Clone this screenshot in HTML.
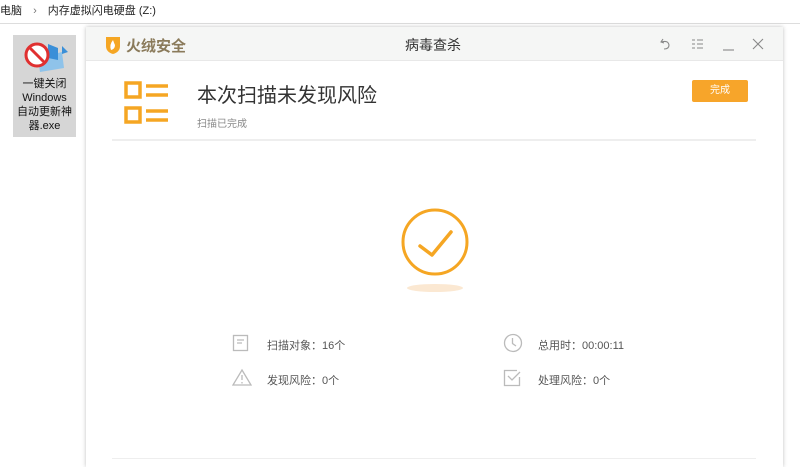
<!DOCTYPE html>
<html><head><meta charset="utf-8"><style>
*{margin:0;padding:0;box-sizing:border-box}
body{width:800px;height:461px;overflow:hidden;background:#fff;font-family:"Liberation Sans","Noto Sans CJK SC",sans-serif;position:relative;color:#333}
.abs{position:absolute}
</style></head><body>
<div class="abs" style="left:0;top:2px;font-size:11px;color:#222;white-space:nowrap">电脑 <span style="color:#777;margin:0 8px">›</span> 内存虚拟闪电硬盘 (Z:)</div>
<div class="abs" style="left:0;top:23px;width:800px;height:1px;background:#ddd"></div>
<div class="abs" style="left:13px;top:35px;width:63px;height:102px;background:#d6d6d6"></div>
<svg class="abs" style="left:22px;top:38px" width="46" height="36" viewBox="0 0 46 36">
<path d="M16 20 L40 14 L42 30 L18 34Z" fill="#8fc3ea"/><path d="M26 6 L36 10 L36 22 L26 20Z" fill="#3a8fd8"/><path d="M40 8 L46 14 L40 16Z" fill="#3a8fd8"/>
<circle cx="15" cy="17" r="11" fill="#fff" stroke="#e03030" stroke-width="3"/><path d="M8 10 L22 24" stroke="#e03030" stroke-width="3"/></svg>
<div class="abs" style="left:13px;top:77px;width:63px;text-align:center;font-size:11px;line-height:14px;color:#111">一键关闭<br>Windows<br>自动更新神<br>器.exe</div>

<div class="abs" style="left:86px;top:27px;width:697px;height:440px;background:#fff;box-shadow:0 0 4px rgba(0,0,0,.25)"></div>
<div class="abs" style="left:86px;top:27px;width:697px;height:34px;background:#f5f6f5;border-bottom:1px solid #e8e8e8"></div>
<svg class="abs" style="left:105px;top:35px" width="16" height="19" viewBox="0 0 16 19"><path d="M1 2 L15 2 L15 11 Q15 17 8 19 Q1 17 1 11Z" fill="#f5a623"/><path d="M8 5 Q4 10 6 15 Q10 14 10 10 Q9 8 8 5Z" fill="#fff"/></svg>
<div class="abs" style="left:126px;top:35px;font-size:15px;font-weight:bold;color:#8a7a5a">火绒安全</div>
<div class="abs" style="left:405px;top:35px;font-size:14px;color:#333">病毒查杀</div>
<svg class="abs" style="left:660px;top:37px" width="110" height="14" fill="none" stroke="#888" stroke-width="1.1">
<path d="M3 2 L1 5 L4 6 M1.5 5 Q8 3 9 8 Q9 12 4 12"/>
<path d="M32 3H35M37 3H43M32 7H35M37 7H43M32 11H35M37 11H43"/>
<path d="M63 13H74"/>
<path d="M93 2L103 12M103 2L93 12"/></svg>

<svg class="abs" style="left:124px;top:81px" width="46" height="45" viewBox="0 0 46 45">
<g fill="none" stroke="#f5a623" stroke-width="3.5"><rect x="2" y="2" width="14" height="14"/><rect x="2" y="27" width="14" height="14"/>
<path d="M22 5 H44 M22 14 H44 M22 30 H44 M22 39 H44"/></g></svg>
<div class="abs" style="left:197px;top:79px;font-size:20px;color:#333">本次扫描未发现风险</div>
<div class="abs" style="left:197px;top:115px;font-size:10px;color:#888">扫描已完成</div>
<div class="abs" style="left:692px;top:80px;width:56px;height:22px;background:#f7a52a;border-radius:2px;color:#fff;font-size:10px;text-align:center;line-height:22px">完成</div>
<div class="abs" style="left:112px;top:139px;width:644px;height:2px;background:#eee"></div>

<svg class="abs" style="left:380px;top:195px" width="110" height="105" viewBox="380 195 110 105">
<ellipse cx="435" cy="288" rx="28" ry="4" fill="#fbe8d2"/>
<circle cx="435" cy="242" r="32" fill="none" stroke="#f5a623" stroke-width="3"/>
<path d="M420 246 L432 255 L451 232" fill="none" stroke="#f5a623" stroke-width="3.5" stroke-linecap="round" stroke-linejoin="round"/></svg>

<svg class="abs" style="left:232px;top:334px" width="18" height="18"><rect x="1.5" y="1.5" width="14" height="15" fill="none" stroke="#bbb" stroke-width="1.3"/><path d="M5 6H12M5 9H10" stroke="#bbb" stroke-width="1.3"/></svg>
<div class="abs" style="left:267px;top:337px;font-size:11px;color:#555">扫描对象：16个</div>
<svg class="abs" style="left:232px;top:368px" width="20" height="18"><path d="M10 2 L19 17 H1Z" fill="none" stroke="#bbb" stroke-width="1.3"/><path d="M10 7V12M10 14V15.5" stroke="#bbb" stroke-width="1.3"/></svg>
<div class="abs" style="left:267px;top:372px;font-size:11px;color:#555">发现风险：0个</div>
<svg class="abs" style="left:503px;top:333px" width="20" height="20"><circle cx="10" cy="10" r="8.5" fill="none" stroke="#bbb" stroke-width="1.3"/><path d="M9.5 5V10.5L13 13" fill="none" stroke="#bbb" stroke-width="1.3"/></svg>
<div class="abs" style="left:538px;top:337px;font-size:11px;color:#555">总用时：00:00:11</div>
<svg class="abs" style="left:503px;top:369px" width="20" height="18"><path d="M14 1.5H1.5V16.5H16.5V8" fill="none" stroke="#bbb" stroke-width="1.3"/><path d="M5 7L9 11L17 3" fill="none" stroke="#bbb" stroke-width="1.3"/></svg>
<div class="abs" style="left:538px;top:372px;font-size:11px;color:#555">处理风险：0个</div>
<div class="abs" style="left:112px;top:458px;width:644px;height:1px;background:#eee"></div>
</body></html>
